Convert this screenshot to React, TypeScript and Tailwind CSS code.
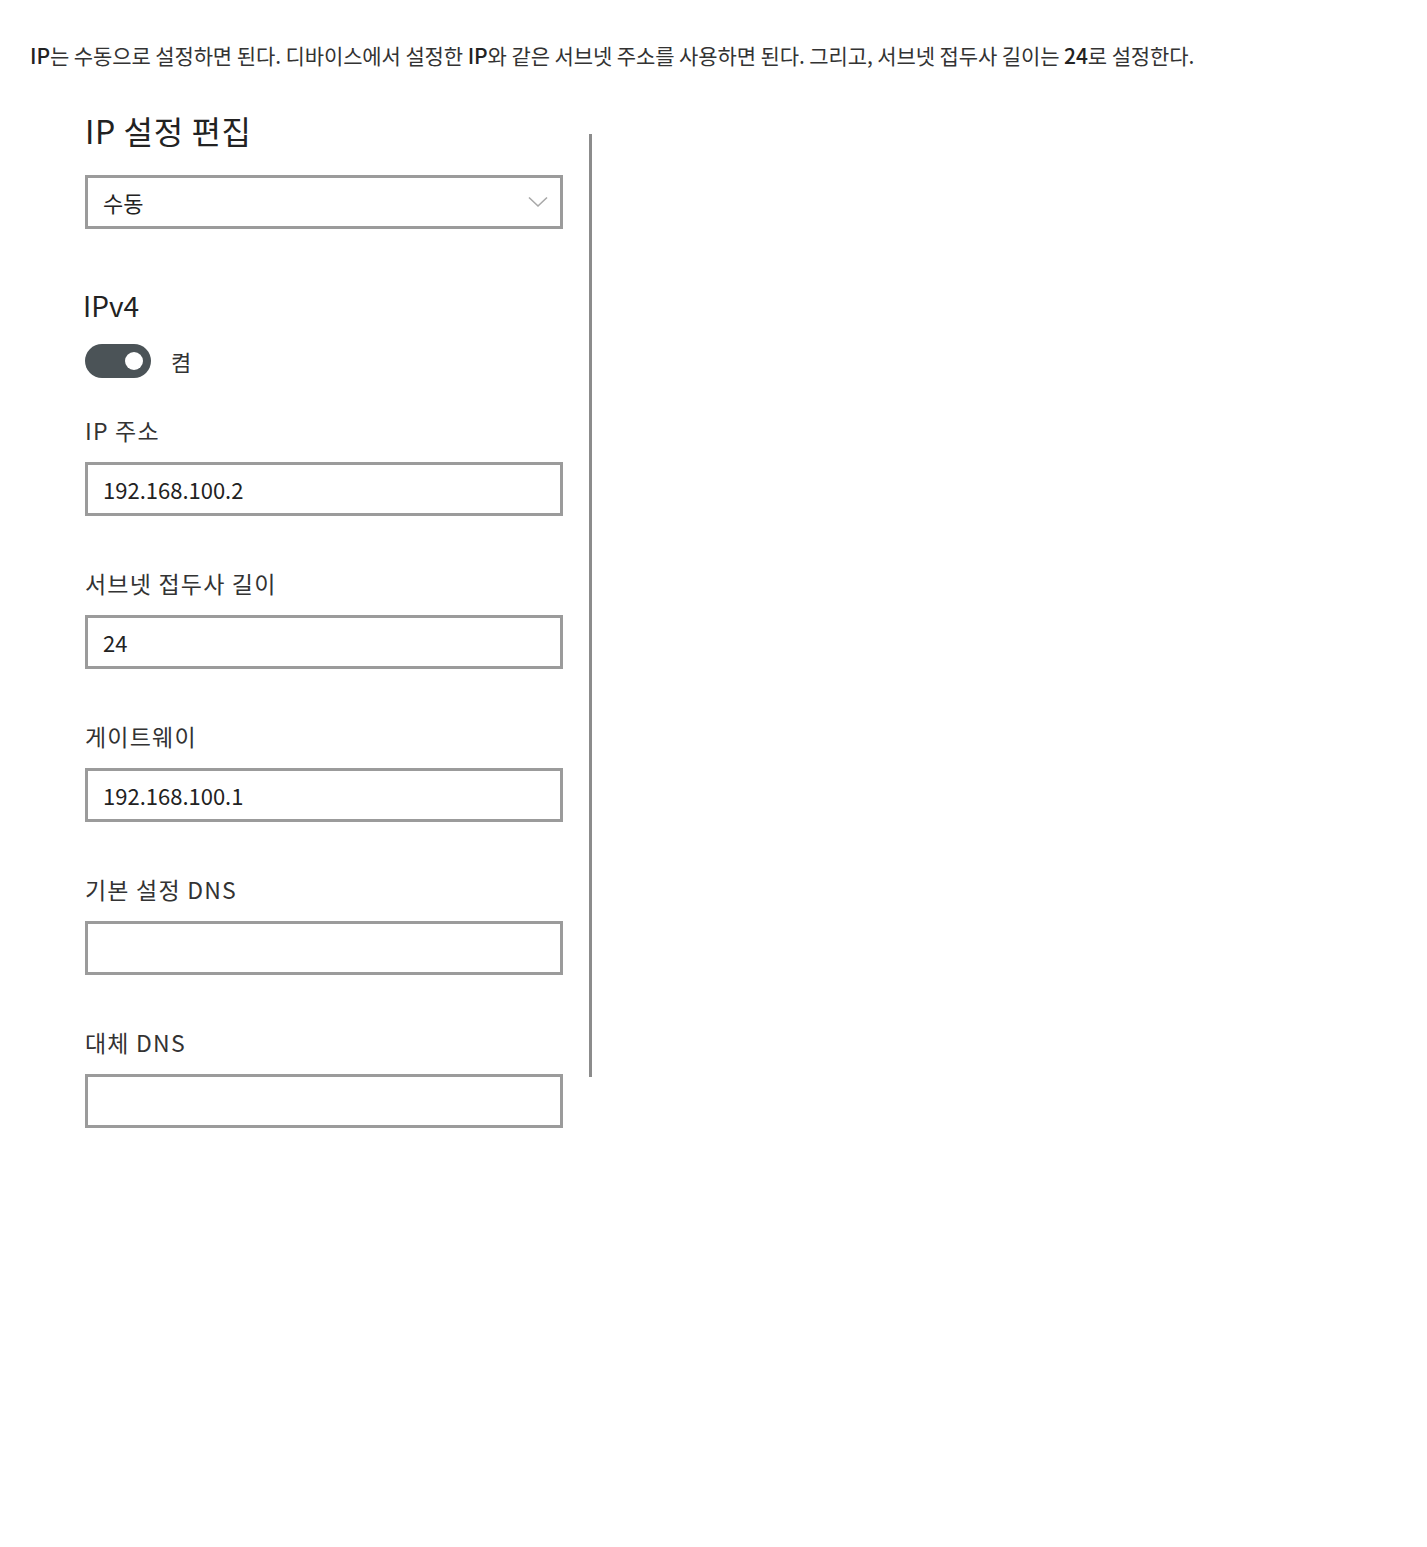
import React from "react";

const font = { fontFamily: '"Noto Sans CJK KR", "Noto Sans", sans-serif' };

function Field({ label, value }: { label: string; value?: string }) {
  return (
    <div className="mt-[51px] flex flex-col">
      <div className="h-[32px] text-[23px] leading-[32px] tracking-[1.2px] text-[#333]">{label}</div>
      <div className="mt-[16px] flex h-[54px] w-[478px] items-center border-[3px] border-[#9b9b9b] bg-white pl-[15px] text-[22px] text-[#222]">
        {value}
      </div>
    </div>
  );
}

export default function App() {
  return (
    <div className="min-h-[1547px] w-full bg-white pl-[30px] pt-[41px]" style={font}>
      <p className="h-[28px] text-[21px] leading-[28px] tracking-[-0.1px] text-[#333]">
        <span className="font-medium text-[#222]">IP</span>는 수동으로 설정하면 된다. 디바이스에서 설정한{" "}
        <span className="font-medium text-[#222]">IP</span>와 같은 서브넷 주소를 사용하면 된다. 그리고, 서브넷 접두사 길이는{" "}
        <span className="font-medium text-[#222]">24</span>로 설정한다.
      </p>

      <div className="mt-[41px] flex flex-row pl-[55px]">
        <div className="flex w-[478px] flex-col">
          <div className="h-[40px] text-[32px] leading-[40px] tracking-[0.6px] text-[#222]">IP 설정 편집</div>
          <div className="mt-[25px] flex h-[54px] w-[478px] items-center justify-between border-[3px] border-[#9b9b9b] bg-white pl-[15px] pr-[12px] text-[22px] text-[#222]">
            <span>수동</span>
            <svg width="20" height="12" viewBox="0 0 20 12" fill="none">
              <polyline points="1,1.5 10,10 19,1.5" stroke="#a8a8a8" strokeWidth="1.6" />
            </svg>
          </div>

          <div className="mt-[58px] ml-[-2px] h-[36px] text-[28px] leading-[36px] text-[#222]">IPv4</div>
          <div className="mt-[21px] flex items-center">
            <div className="flex h-[34px] w-[66px] items-center justify-end rounded-full bg-[#4b5357] pr-[8px]">
              <div className="h-[18px] w-[18px] rounded-full bg-white" />
            </div>
            <span className="ml-[20px] text-[22px] leading-[32px] text-[#333]">켬</span>
          </div>

          <div className="mt-[36px] flex flex-col">
            <div className="h-[32px] text-[23px] leading-[32px] tracking-[1.2px] text-[#333]">IP 주소</div>
            <div className="mt-[16px] flex h-[54px] w-[478px] items-center border-[3px] border-[#9b9b9b] bg-white pl-[15px] text-[22px] text-[#222]">
              192.168.100.2
            </div>
          </div>

          <Field label="서브넷 접두사 길이" value="24" />
          <Field label="게이트웨이" value="192.168.100.1" />
          <Field label="기본 설정 DNS" />
          <Field label="대체 DNS" />
        </div>
        <div className="ml-[26px] mt-[24px] h-[943px] w-[3px] bg-[#8c8c8c]" />
      </div>
    </div>
  );
}
